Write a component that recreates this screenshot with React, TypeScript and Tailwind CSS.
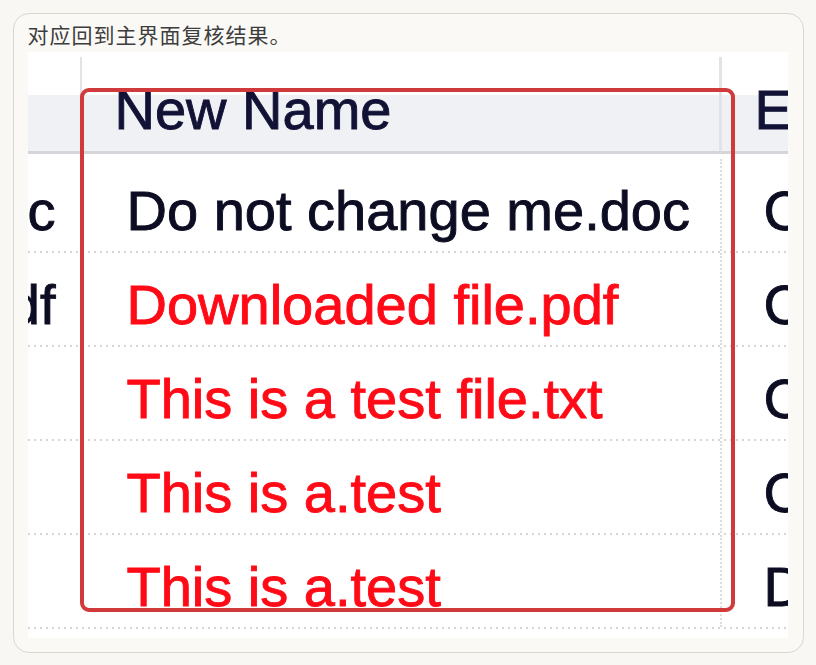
import React from "react";

type Row = { left: string; name: string; red: boolean; right: string };

const rows: Row[] = [
  { left: "Do not change me.doc", name: "Do not change me.doc", red: false, right: "C:\\Files" },
  { left: "Downloaded file.pdf", name: "Downloaded file.pdf", red: true, right: "C:\\Files" },
  { left: "", name: "This is a test file.txt", red: true, right: "C:\\Files" },
  { left: "", name: "This is a.test", red: true, right: "C:\\Files" },
  { left: "", name: "This is a.test", red: true, right: "D:\\Files" },
];

function Dots() {
  return (
    <div className="h-[2px] w-full bg-[repeating-linear-gradient(to_right,#d6d6d6_0px,#d6d6d6_2px,transparent_2px,transparent_6px)]" />
  );
}

export default function App() {
  return (
    <div className="w-[816px] h-[665px] bg-[#f8f7f3] pt-[13px] pl-[13px]">
      <div className="w-[791px] h-[640px] rounded-[16px] border-[1.5px] border-[#dbd7cd] bg-[#faf9f6] pl-[13.5px] pt-[8px]">
        <p className="h-[24px] leading-[24px] text-[21px] tracking-[1px] text-[#3d3d3d] font-['Noto_Sans_CJK_SC',sans-serif]">
          对应回到主界面复核结果。
        </p>
        <div className="relative mt-[6px] h-[586px] w-[760px] overflow-hidden bg-white font-['Liberation_Sans',Arial,sans-serif] [-webkit-text-stroke:0.9px_currentColor]">
          {/* header */}
          <div className="mt-[5px] flex h-[94px] bg-[linear-gradient(to_bottom,#ffffff_0%,#ffffff_40%,#f0f1f4_40%,#f0f1f4_100%)]">
            <div className="w-[54px] shrink-0 border-r-2 border-[#e2e3e7]" />
            <div className="w-[640px] shrink-0 border-r-[3px] border-[#e2e3e7] pl-[33px] pt-[25px] text-[56px] leading-[56px] text-[#121236] whitespace-nowrap">
              New Name
            </div>
            <div className="flex-1 pl-[33px] pt-[25px] text-[56px] leading-[56px] text-[#121236] whitespace-nowrap">
              Error
            </div>
          </div>
          <div className="h-[3px] bg-[#d5d6d9]" />
          <div className="h-[5px]" />
          {/* body */}
          {rows.map((r, i) => (
            <div key={i}>
              <div className="flex h-[92px]">
                <div className="flex w-[54px] shrink-0 justify-end overflow-hidden pr-[26px] pt-[24px] text-[56px] leading-[56px] text-[#0c0c22] whitespace-nowrap">
                  {r.left}
                </div>
                <div
                  className={
                    r.red
                      ? "w-[640px] shrink-0 border-r-2 border-dotted border-[#dcdcdc] pl-[45px] pt-[24px] text-[56px] leading-[56px] text-[#ff0a16] whitespace-nowrap"
                      : "w-[640px] shrink-0 border-r-2 border-dotted border-[#dcdcdc] pl-[45px] pt-[24px] text-[56px] leading-[56px] text-[#0c0c22] whitespace-nowrap"
                  }
                >
                  {r.name}
                </div>
                <div className="flex-1 pl-[42px] pt-[24px] text-[56px] leading-[56px] text-[#0c0c22] whitespace-nowrap">
                  {r.right}
                </div>
              </div>
              <Dots />
            </div>
          ))}
          {/* highlight box */}
          <div className="pointer-events-none absolute left-[52px] top-[36px] h-[524px] w-[655px] rounded-[9px] border-[4.5px] border-[#d03a3a] [-webkit-text-stroke:0px]" />
        </div>
      </div>
    </div>
  );
}
